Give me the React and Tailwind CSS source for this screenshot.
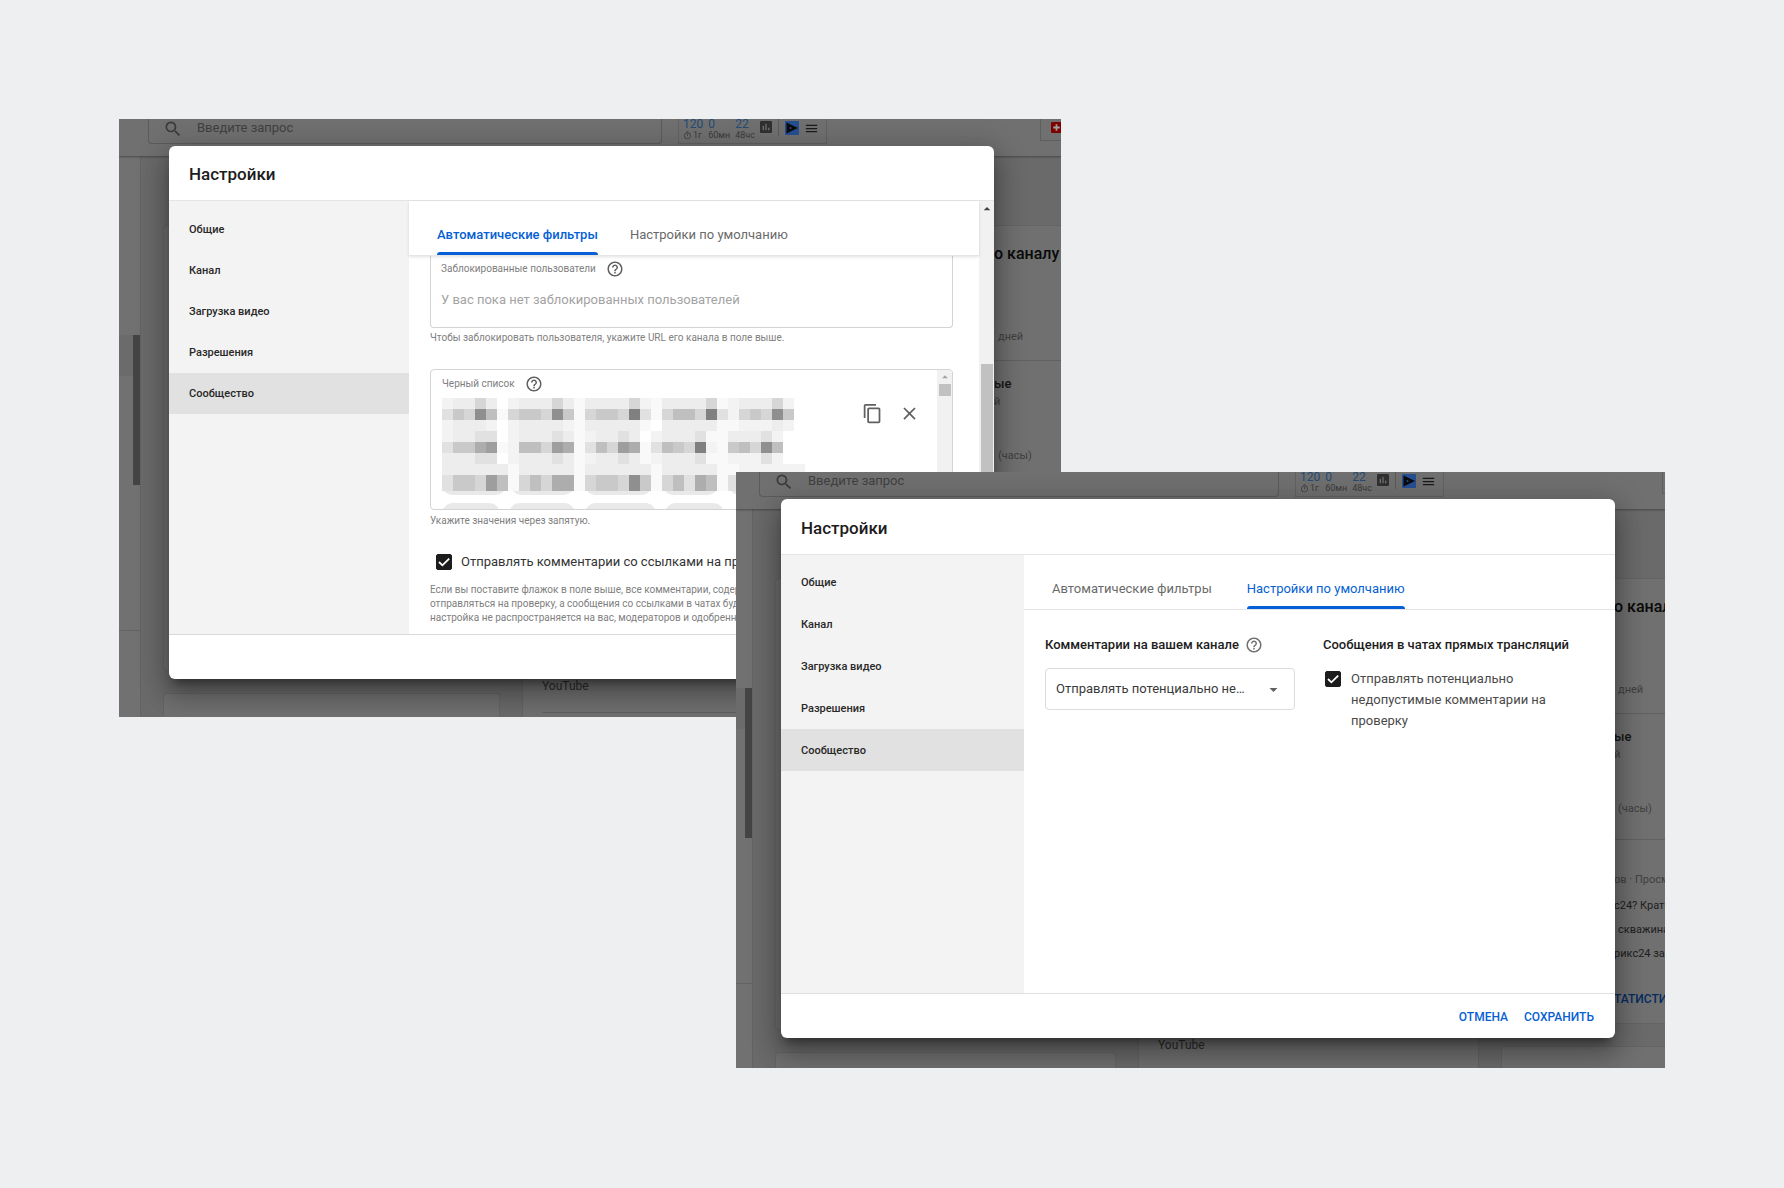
import React, { useState } from "react";
import {
    MdArrowDropDown,
    MdArrowDropUp,
    MdClose,
    MdContentCopy,
    MdHelpOutline,
    MdMenu,
    MdOutlineTimer,
    MdPoll,
    MdSearch,
} from "react-icons/md";

const NAV_ITEMS = ["Общие", "Канал", "Загрузка видео", "Разрешения", "Сообщество"];

// Grey levels of the pixelated words, one character per 11px cell
const LEVELS = {
    0: "#ffffff",
    1: "#f9f9f9",
    2: "#f3f3f3",
    3: "#ededed",
    4: "#e1e1e1",
    5: "#d6d6d6",
    6: "#c9c9c9",
    7: "#bfbfbf",
    8: "#adadad",
    9: "#9e9e9e",
    a: "#8f8f8f",
    b: "#808080",
};

const MOSAIC = [
    "23353023335313333521333351233352",
    "465a715665a615665b415775b42565a6",
    "23332023333213333310333331122232",
    "23344023334312334302333411333420",
    "46689127759814759814765b21675a70",
    "33344023334312334312333411222420",
    "333333133333133333313333311222222",
    "46659715758815665a61574871466",
];

function Mosaic() {
    return (
        <svg width="374" height="120" viewBox="0 0 374 120" aria-hidden="true" className="block shrink-0">
            <g fill="#e9e9e9">
                <rect x="0" y="76" width="64" height="21" rx="10" />
                <rect x="69" y="76" width="63" height="21" rx="10" />
                <rect x="143" y="76" width="67" height="21" rx="10" />
                <rect x="221" y="76" width="55" height="21" rx="10" />
                <rect x="287" y="76" width="60" height="21" rx="10" />
                <rect x="0" y="105" width="58" height="22" rx="11" />
                <rect x="67" y="105" width="66" height="22" rx="11" />
                <rect x="143" y="105" width="71" height="22" rx="11" />
                <rect x="223" y="105" width="59" height="22" rx="11" />
            </g>
            {MOSAIC.map((row, y) =>
                row.split("").map((level, x) => (
                    <rect
                        key={`${x}-${y}`}
                        x={x * 11}
                        y={y * 11}
                        width="11"
                        height={y === 7 ? 16 : 11}
                        fill={LEVELS[level]}
                        shapeRendering="crispEdges"
                    />
                ))
            )}
        </svg>
    );
}

function Stat({ value, label, timer }) {
    return (
        <div className="flex flex-col text-[9px] leading-[10px] text-[#3b3b3b]">
            <span className="text-[12px] leading-[12px] text-[#234c74]">{value}</span>
            <span className="flex items-center">
                {timer && <MdOutlineTimer className="w-[9px] h-[9px] mr-px" />}
                {label}
            </span>
        </div>
    );
}

// Dimmed studio page that stays visible around the dialog
function Backdrop({ railClass, gutterClass, searchClass, columnClass, cardClass, videoClass, edgeClass }) {
    return (
        <div className="absolute inset-0 overflow-hidden flex flex-col bg-[#6a6a6a]" inert>
            <div className="relative z-10 flex shrink-0 h-[37px] items-start bg-[#707070] shadow-[0_1px_2px_rgba(0,0,0,0.35)]">
                <div className={`${gutterClass} shrink-0`} />
                <label className={`${searchClass} flex h-[25px] shrink-0 items-start gap-3.5 pl-[14px] border border-t-0 border-[#5c5c5c] rounded-b-sm`}>
                    <MdSearch className="w-[20px] h-[20px] shrink-0 text-[#3a3a3a]" />
                    <input
                        type="text"
                        placeholder="Введите запрос"
                        className="w-full h-[18px] text-[13px] bg-transparent outline-none placeholder:text-[#404040]"
                    />
                </label>
                <div className="ml-4 flex w-[149px] h-[25px] shrink-0 items-start pl-1 border border-t-0 border-[#626262]">
                    <div className="flex w-[75px] gap-[5px] -mt-px">
                        <Stat value="120" label="1г" timer />
                        <Stat value="0" label="60мн" />
                        <Stat value="22" label="48чс" />
                    </div>
                    <MdPoll className="w-[16px] h-[16px] shrink-0 text-[#303030]" />
                    <span className="ml-1 w-px h-[17px] bg-[#5a5a5a]" />
                    <svg viewBox="0 0 14 14" className="ml-1.5 mt-0.5 w-[14px] h-[14px] shrink-0" aria-hidden="true">
                        <rect width="14" height="14" rx="1" fill="#264f93" />
                        <path d="M1.5 1.5l11.5 5.5-11.5 5.5z" fill="#0b0b0b" />
                        <circle cx="5.5" cy="7" r="1" fill="#264f93" />
                    </svg>
                    <MdMenu className="ml-[5px] mt-0.5 w-[15px] h-[15px] shrink-0 text-[#1a1a1a]" />
                </div>
                <div className={`${edgeClass} flex h-[22px] w-20 shrink-0 items-start border border-t-0 border-[#5f5f5f] pl-2.5 pt-[3px]`}>
                    <svg viewBox="0 0 10 10" className="w-[11px] h-[11px]" aria-hidden="true">
                        <rect width="10" height="10" rx="1" fill="#7d0000" />
                        <path d="M5 2v6M2 5h6" stroke="#a0a0a0" strokeWidth="1.6" />
                    </svg>
                </div>
            </div>
            <div className="flex grow">
                <div className={`${railClass} shrink-0 flex flex-col items-end bg-[#717171] border-r border-[#636363]`}>
                    <div className="h-[179px]" />
                    <div className="flex w-full h-[41px] justify-end bg-[#6b6b6b]">
                        <div className="w-[7px] h-[150px] bg-[#444]" />
                    </div>
                    <div className="h-[254px]" />
                    <div className="w-full h-px bg-[#636363]" />
                </div>
                <div className="flex grow items-stretch gap-[22px] pl-[22px] pt-[69px]">
                    <div className={`${columnClass} shrink-0 flex flex-col gap-[22px]`}>
                        <div className={`${cardClass} shrink-0 rounded-sm border border-[#646464] bg-[#707070]`} />
                        <div className="grow rounded-t-sm border border-b-0 border-[#646464] bg-[#707070]" />
                    </div>
                    <div className={`${columnClass} ${videoClass} shrink-0 border-x border-[#646464] bg-[#707070] px-[19px]`}>
                        <p className="text-[12px] leading-[16px] text-[#2b2b2b]">YouTube</p>
                        <div className="mt-[18px] h-px bg-[#606060]" />
                    </div>
                    <div className={`${columnClass} shrink-0 flex flex-col gap-[22px]`}>
                        <div className="h-[446px] shrink-0 rounded-sm border border-[#646464] bg-[#707070] text-[11px] leading-[18px] text-[#404040] whitespace-nowrap">
                            <div className="pl-[112px] h-[135px] border-b border-[#606060] pt-[18px]">
                                <h2 className="text-[16px] leading-[20px] font-medium text-[#0a0a0a]">о каналу</h2>
                                <p className="pl-1 mt-[64px]">дней</p>
                            </div>
                            <div className="pl-[112px] h-[126px] border-b border-[#606060] pt-[14px]">
                                <h3 className="text-[13px] font-medium text-[#161616]">ые</h3>
                                <p>й</p>
                                <p className="pl-1 mt-[36px]">(часы)</p>
                            </div>
                            <div className="pl-[112px] pt-[31px]">
                                <p>ов · Просмотры</p>
                                <p className="mt-2 text-[#1e1e1e]">с24? Краткий</p>
                                <p className="mt-1.5 pl-1 text-[#1e1e1e]">скважина</p>
                                <p className="mt-1.5 text-[#1e1e1e]">рикс24 за</p>
                                <a href="#stats" className="mt-[27px] block text-[12px] font-medium text-[#052c60]">
                                    ТАТИСТИКА
                                </a>
                            </div>
                        </div>
                        <div className="grow rounded-t-sm border border-b-0 border-[#646464] bg-[#707070]" />
                    </div>
                </div>
            </div>
        </div>
    );
}

function SideNav({ className, itemClass }) {
    return (
        <nav className={`${className} shrink-0 bg-[#f3f3f3]`}>
            {NAV_ITEMS.map((item) => (
                <button
                    key={item}
                    type="button"
                    className={`${itemClass} block w-full pt-0.5 px-5 text-left text-[11px] font-medium text-[#282828] ${
                        item === "Сообщество" ? "bg-[#e1e1e1]" : ""
                    }`}
                >
                    {item}
                </button>
            ))}
        </nav>
    );
}

function Tab({ active, heavy, children }) {
    return (
        <button
            type="button"
            role="tab"
            aria-selected={active}
            className={`relative h-full pt-[14px] text-[13px] ${heavy ? "font-medium" : "font-normal"} ${
                active ? "text-[#065fd4]" : "text-[#6a6a6a]"
            }`}
        >
            {children}
            {active && <span className="absolute inset-x-0 bottom-0 h-[3px] rounded-t-sm bg-[#065fd4]" />}
        </button>
    );
}

function Checkbox({ id }) {
    const [checked, setChecked] = useState(true);

    return (
        <span className="relative w-4 h-4 shrink-0">
            <input
                id={id}
                type="checkbox"
                checked={checked}
                onChange={(e) => setChecked(e.target.checked)}
                className="block w-4 h-4 appearance-none rounded-xs border border-[#1c1c1c] checked:bg-[#1c1c1c]"
            />
            {checked && (
                <svg viewBox="0 0 16 16" className="absolute inset-0 pointer-events-none" aria-hidden="true">
                    <path d="M3 8l3.4 3.3L13.2 4.6" fill="none" stroke="#fff" strokeWidth="1.8" />
                </svg>
            )}
        </span>
    );
}

function FiltersWindow() {
    return (
        <section className="relative w-[942px] max-w-full overflow-hidden">
            <Backdrop
                railClass="w-[22px]"
                gutterClass="w-[29px]"
                searchClass="w-[514px]"
                columnClass="w-[337px]"
                cardClass="h-[446px]"
                videoClass="pt-[453px]"
                edgeClass="ml-[213px]"
            />
            <div
                role="dialog"
                aria-label="Настройки"
                className="relative z-20 mt-[27px] ml-[50px] mr-[67px] mb-[38px] rounded-md overflow-clip bg-white shadow-[0_16px_24px_2px_rgba(0,0,0,0.2),0_6px_30px_5px_rgba(0,0,0,0.2),0_8px_10px_-5px_rgba(0,0,0,0.4)]"
            >
                <header className="h-[55px] flex items-center pt-1 px-5 border-b border-[#e5e5e5]">
                    <h1 className="text-[17px] font-medium text-[#1c1c1c]">Настройки</h1>
                </header>
                <div className="flex min-h-[433px]">
                    <SideNav className="w-[240px] pt-2" itemClass="h-[41px]" />
                    <div className="grow min-w-0 flex flex-col">
                        <div role="tablist" className="relative z-10 flex h-[55px] gap-8 px-7 border-b border-[#e5e5e5] shadow-[0_1px_3px_rgba(0,0,0,0.12)]">
                            <Tab active heavy>Автоматические фильтры</Tab>
                            <Tab>Настройки по умолчанию</Tab>
                        </div>
                        <div className="pl-[21px] pr-[26px] text-[10px] leading-[14px] text-[#808080]">
                            <div className="h-[72px] px-2.5 border border-t-0 border-[#d3d3d3] rounded-b">
                                <div className="flex items-center gap-2.5 h-[25px]">
                                    <label htmlFor="blocked">Заблокированные пользователи</label>
                                    <MdHelpOutline className="w-[18px] h-[18px] text-[#606060]" />
                                </div>
                                <input
                                    id="blocked"
                                    type="text"
                                    placeholder="У вас пока нет заблокированных пользователей"
                                    className="w-full h-9 text-[13px] outline-none placeholder:text-[#a3a3a3]"
                                />
                            </div>
                            <p className="mt-[3px]">Чтобы заблокировать пользователя, укажите URL его канала в поле выше.</p>
                            <div className="mt-6 h-[141px] flex overflow-hidden border border-[#d3d3d3] rounded">
                                <div className="pl-[11px] shrink-0">
                                    <div className="flex items-center gap-2.5 h-[28px]">
                                        <span>Черный список</span>
                                        <MdHelpOutline className="w-[18px] h-[18px] text-[#606060]" />
                                    </div>
                                    <Mosaic />
                                </div>
                                <div className="grow flex items-start justify-end gap-4 pt-[33px] pr-[17px] text-[#606060]">
                                    <button type="button" aria-label="Копировать">
                                        <MdContentCopy className="w-[21px] h-[21px]" />
                                    </button>
                                    <button type="button" aria-label="Очистить">
                                        <MdClose className="w-[21px] h-[21px]" />
                                    </button>
                                </div>
                                <div className="w-[15px] shrink-0 flex flex-col items-center bg-[#f1f1f1]">
                                    <MdArrowDropUp className="w-[14px] h-[14px] text-[#a3a3a3]" />
                                    <div className="w-[12px] h-[12px] bg-[#c1c1c1]" />
                                </div>
                            </div>
                            <p className="mt-1">Укажите значения через запятую.</p>
                            <div className="mt-[23px] h-[22px] pl-1.5 flex items-center gap-[9px]">
                                <Checkbox id="links" />
                                <label htmlFor="links" className="text-[13px] text-[#333]">
                                    Отправлять комментарии со ссылками на проверку
                                </label>
                            </div>
                            <p className="mt-2.5 whitespace-nowrap">
                                Если вы поставите флажок в поле выше, все комментарии, содержащие ссылки, будут
                                <br />
                                отправляться на проверку, а сообщения со ссылками в чатах будут блокироваться. Эта
                                <br />
                                настройка не распространяется на вас, модераторов и одобренных пользователей.
                            </p>
                        </div>
                    </div>
                    <div className="w-[15px] shrink-0 flex flex-col items-center bg-[#f1f1f1]">
                        <MdArrowDropUp className="w-[16px] h-[16px] text-[#404040]" />
                        <div className="mt-[147px] w-[12px] grow bg-[#c1c1c1]" />
                    </div>
                </div>
                <footer className="h-[45px] border-t border-[#d9d9d9]" />
            </div>
        </section>
    );
}

function DefaultsWindow() {
    return (
        <section className="relative z-30 self-end -mt-[245px] w-[929px] max-w-full overflow-hidden">
            <Backdrop
                railClass="w-[17px]"
                gutterClass="w-[23px]"
                searchClass="w-[520px]"
                columnClass="w-[341px]"
                cardClass="h-[452px]"
                videoClass="pt-[459px]"
                edgeClass="ml-[218px]"
            />
            <div
                role="dialog"
                aria-label="Настройки"
                className="relative z-20 mt-[27px] ml-[45px] mr-[50px] mb-[30px] rounded-md overflow-clip bg-white shadow-[0_16px_24px_2px_rgba(0,0,0,0.2),0_6px_30px_5px_rgba(0,0,0,0.2),0_8px_10px_-5px_rgba(0,0,0,0.4)]"
            >
                <header className="h-[56px] flex items-center pt-1 px-5 border-b border-[#e5e5e5]">
                    <h1 className="text-[17px] font-medium text-[#1c1c1c]">Настройки</h1>
                </header>
                <div className="flex min-h-[438px]">
                    <SideNav className="w-[243px] pt-1.5" itemClass="h-[42px]" />
                    <div className="grow min-w-0">
                        <div role="tablist" className="flex h-[55px] gap-[35px] px-7 border-b border-[#e5e5e5]">
                            <Tab>Автоматические фильтры</Tab>
                            <Tab active>Настройки по умолчанию</Tab>
                        </div>
                        <div className="flex gap-7 px-[21px] pt-6">
                            <div className="w-[250px] shrink-0">
                                <div className="flex items-center gap-1.5 h-[22px]">
                                    <label htmlFor="comments" className="text-[13px] font-medium text-[#1c1c1c]">
                                        Комментарии на вашем канале
                                    </label>
                                    <MdHelpOutline className="w-[18px] h-[18px] text-[#707070]" />
                                </div>
                                <div className="relative mt-3">
                                    <select
                                        id="comments"
                                        className="w-full h-[42px] pl-2.5 pr-12 appearance-none truncate border border-[#dcdcdc] rounded text-[13px] text-[#3a3a3a] bg-white"
                                    >
                                        <option>Отправлять потенциально недопустимые комментарии на проверку</option>
                                        <option>Отключить комментарии</option>
                                    </select>
                                    <MdArrowDropDown className="absolute right-3 top-3 w-[19px] h-[19px] text-[#606060] pointer-events-none" />
                                </div>
                            </div>
                            <div className="grow min-w-0">
                                <h2 className="h-[22px] leading-[22px] text-[13px] font-medium text-[#1c1c1c] whitespace-nowrap">
                                    Сообщения в чатах прямых трансляций
                                </h2>
                                <div className="mt-3 pl-0.5 flex items-start gap-2.5">
                                    <span className="pt-[3px]">
                                        <Checkbox id="live" />
                                    </span>
                                    <label htmlFor="live" className="max-w-[220px] text-[13px] leading-[21px] text-[#4a4a4a]">
                                        Отправлять потенциально недопустимые комментарии на проверку
                                    </label>
                                </div>
                            </div>
                        </div>
                    </div>
                </div>
                <footer className="h-[45px] flex items-center justify-end gap-4 px-[21px] pt-0.5 border-t border-[#e0e0e0] text-[12px] font-medium text-[#065fd4]">
                    <button type="button">ОТМЕНА</button>
                    <button type="button">СОХРАНИТЬ</button>
                </footer>
            </div>
        </section>
    );
}

export default function App() {
    return (
        <main className="min-h-screen flex flex-col items-start p-[119px] bg-[#edeff1] font-[Roboto,sans-serif]">
            <FiltersWindow />
            <DefaultsWindow />
        </main>
    );
}
